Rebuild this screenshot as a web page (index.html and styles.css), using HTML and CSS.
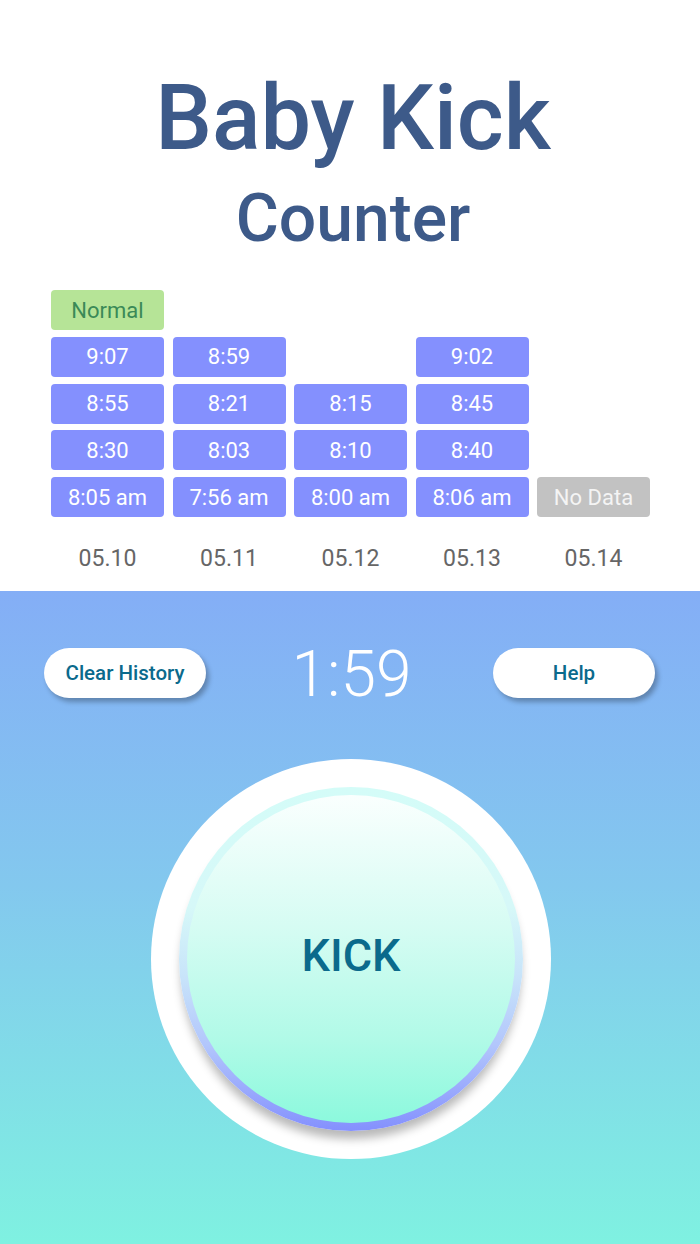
FILE: index.html
```html
<!DOCTYPE html>
<html lang="en">

<head>
    <meta charset="UTF-8">
    <meta name="viewport" content="width=device-width, initial-scale=1.0">
    <title>Baby Kick Counter</title>
    <link rel="stylesheet" href="styles.css">
</head>

<body>

    <div class="top">
        <h1 class="title">Baby Kick</h1>
        <h2 class="subtitle">Counter</h2>

        <div class="history">
            <div class="day">
                <div class="cell normal">Normal</div>
                <div class="cell">9:07</div>
                <div class="cell">8:55</div>
                <div class="cell">8:30</div>
                <div class="cell">8:05 am</div>
            </div>
            <div class="day">
                <div class="cell">8:59</div>
                <div class="cell">8:21</div>
                <div class="cell">8:03</div>
                <div class="cell">7:56 am</div>
            </div>
            <div class="day">
                <div class="cell">8:15</div>
                <div class="cell">8:10</div>
                <div class="cell">8:00 am</div>
            </div>
            <div class="day">
                <div class="cell">9:02</div>
                <div class="cell">8:45</div>
                <div class="cell">8:40</div>
                <div class="cell">8:06 am</div>
            </div>
            <div class="day">
                <div class="cell empty">No Data</div>
            </div>
        </div>

        <div class="dates">
            <span>05.10</span>
            <span>05.11</span>
            <span>05.12</span>
            <span>05.13</span>
            <span>05.14</span>
        </div>
    </div>

    <div class="bottom">
        <div class="controls">
            <button class="pill">Clear History</button>
            <div class="timer">1:59</div>
            <button class="pill">Help</button>
        </div>

        <div class="kick-wrap">
            <div class="kick-outer">
                <div class="kick-ring">
                    <div class="kick-btn">KICK</div>
                </div>
            </div>
        </div>
    </div>

</body>

</html>
```

FILE: styles.css
```css
* {
    margin: 0;
    padding: 0;
    box-sizing: border-box;
}

body {
    font-family: Roboto, "Noto Sans", sans-serif;
    width: 700px;
    height: 1244px;
    overflow: hidden;
    background-color: #ffffff;
}

/* top half: title + history */
.top {
    height: 591px;
    padding-top: 74px;
    background-color: #ffffff;
}

.title {
    font-size: 90px;
    font-weight: 500;
    line-height: 1;
    text-align: center;
    color: #3d5a89;
    padding-left: 6px;
}

.subtitle {
    margin-top: 22px;
    font-size: 66px;
    font-weight: 500;
    line-height: 1;
    text-align: center;
    color: #3d5a89;
    padding-left: 6px;
}

.history {
    display: flex;
    gap: 8.5px;
    margin-top: 38px;
    padding-left: 51px;
    height: 227px;
}

.day {
    display: flex;
    flex-direction: column;
    justify-content: flex-end;
    gap: 6.75px;
    width: 113px;
}

.cell {
    height: 40px;
    display: flex;
    justify-content: center;
    align-items: center;
    border-radius: 4px;
    background-color: #8490fe;
    color: #ffffff;
    font-size: 22px;
}

.cell.normal {
    background-color: #b6e497;
    color: #3b8a57;
}

.cell.empty {
    background-color: #c2c2c2;
    color: #f4f4f4;
}

.dates {
    display: flex;
    gap: 8.5px;
    margin-top: 30px;
    padding-left: 51px;
}

.dates span {
    width: 113px;
    text-align: center;
    font-size: 23px;
    line-height: 1;
    color: #666666;
}

/* bottom half: timer + kick button */
.bottom {
    height: 653px;
    background: linear-gradient(180deg, #84aef6 0%, #83c8ee 45%, #7ff1e1 100%);
    padding-top: 55px;
}

.controls {
    display: grid;
    grid-template-columns: 162px 1fr 162px;
    align-items: center;
    padding: 0 45px 0 44px;
}

.pill {
    height: 50px;
    border: none;
    border-radius: 25px;
    background-color: #ffffff;
    color: #0b6a8c;
    font-family: Roboto, "Noto Sans", sans-serif;
    font-size: 20.5px;
    font-weight: 500;
    box-shadow: 3px 4px 5px rgba(0, 0, 0, 0.28);
}

.timer {
    text-align: center;
    font-size: 64px;
    font-weight: 300;
    line-height: 50px;
    color: #ffffff;
    padding-top: 4px;
    padding-left: 4px;
}

.kick-wrap {
    display: flex;
    justify-content: center;
    margin-top: 59px;
    padding-left: 2px;
}

.kick-outer {
    width: 400px;
    height: 400px;
    border-radius: 50%;
    background-color: #ffffff;
    padding: 28px;
}

.kick-ring {
    width: 344px;
    height: 344px;
    border-radius: 50%;
    padding: 8px;
    background: linear-gradient(180deg, #d4fcf8 0%, #d6f8f8 35%, #c8e4fa 55%, #b2c6fc 75%, #8490fe 100%);
    box-shadow: 0 10px 10px -2px rgba(0, 0, 0, 0.28);
}

.kick-btn {
    width: 100%;
    height: 100%;
    border-radius: 50%;
    background: linear-gradient(180deg, #fafffe 0%, #d6fcf3 40%, #b0fae7 75%, #8cf9dd 100%);
    display: flex;
    justify-content: center;
    align-items: center;
    padding-bottom: 8px;
    font-size: 45px;
    font-weight: 500;
    color: #0b6a8c;
}
```
